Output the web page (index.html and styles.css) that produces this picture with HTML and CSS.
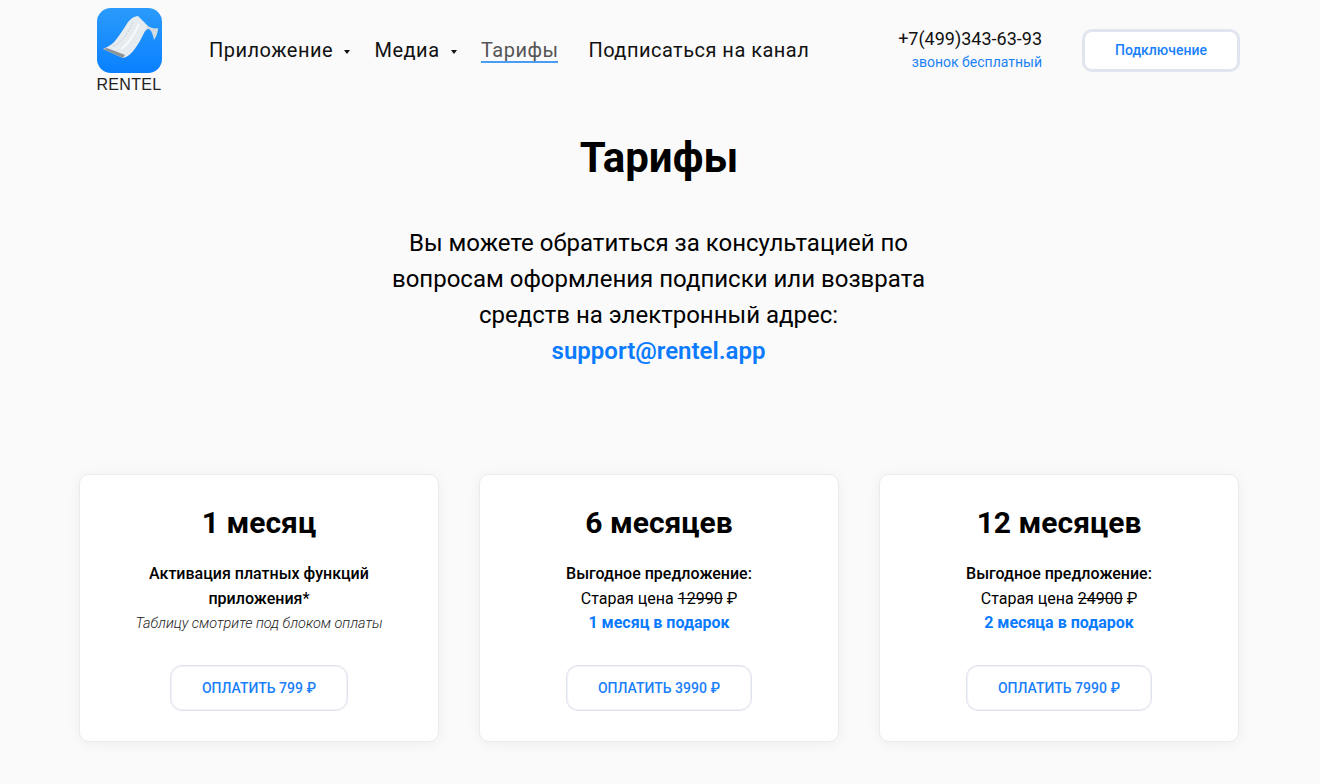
FILE: index.html
```html
<!DOCTYPE html>
<html lang="ru">
<head>
    <meta charset="UTF-8">
    <title>Тарифы</title>
    <link rel="stylesheet" href="styles.css">
</head>
<body>
    <header class="header">
        <a class="logo" href="#">
            <svg class="logo-icon" width="65" height="65" viewBox="0 0 65 65">
                <defs>
                    <linearGradient id="logoBg" x1="0" y1="0" x2="0" y2="1">
                        <stop offset="0" stop-color="#2a9bfb"/>
                        <stop offset="1" stop-color="#0a80ff"/>
                    </linearGradient>
                </defs>
                <rect width="65" height="65" rx="14" fill="url(#logoBg)"/>
                <!-- paper strip -->
                <path d="M6 41 C12 38 16 36 18 33 C23 27 27 20 31 14 C34 10 38 8 41 8 L51 18 C50 20 48 23 47 25 C44 31 41 37 37 42 C34 46 30 49 26 50 Z" fill="#e6ebef"/>
                <path d="M47 25 C48 22 50 19 51 18 C54 20 58 21 61 20 C61 25 59 29 57 32 C56 27 55 23 52 21 C50 21 48 23 47 25 Z" fill="#d4dce1"/>
                <path d="M6 41 L10 40 L28 47 L26 50 Z" fill="#8b9398"/>
                <path d="M16 38 C24 36 31 25 36 15" fill="none" stroke="#bfc9d0" stroke-width="1" stroke-dasharray="1.5 1.5"/>
                <path d="M24 41 C31 37 37 27 42 16" fill="none" stroke="#f6f8f9" stroke-width="2"/>
            </svg>
            <span class="logo-text">RENTEL</span>
        </a>
        <nav class="nav">
            <a class="nav-link has-caret" href="#">Приложение</a>
            <a class="nav-link has-caret" href="#">Медиа</a>
            <a class="nav-link active" href="#">Тарифы</a>
            <a class="nav-link" href="#">Подписаться на канал</a>
        </nav>
        <div class="phone">
            <a class="phone-number" href="#">+7(499)343-63-93</a>
            <span class="phone-note">звонок бесплатный</span>
        </div>
        <a class="connect-btn" href="#">Подключение</a>
    </header>

    <main>
        <section class="intro">
            <h1>Тарифы</h1>
            <p>Вы можете обратиться за консультацией по вопросам оформления подписки или возврата средств на электронный адрес:<br><a class="mail" href="#">support@rentel.app</a></p>
        </section>

        <section class="plans">
            <div class="plan">
                <h2>1 месяц</h2>
                <div class="plan-text">
                    <b>Активация платных функций приложения*</b><br>
                    <i class="plan-note">Таблицу смотрите под блоком оплаты</i>
                </div>
                <a class="pay-btn" href="#">Оплатить 799 ₽</a>
            </div>
            <div class="plan">
                <h2>6 месяцев</h2>
                <div class="plan-text">
                    <b>Выгодное предложение:</b><br>
                    Старая цена <s>12990</s> ₽<br>
                    <b class="gift">1 месяц в подарок</b>
                </div>
                <a class="pay-btn" href="#">Оплатить 3990 ₽</a>
            </div>
            <div class="plan">
                <h2>12 месяцев</h2>
                <div class="plan-text">
                    <b>Выгодное предложение:</b><br>
                    Старая цена <s>24900</s> ₽<br>
                    <b class="gift">2 месяца в подарок</b>
                </div>
                <a class="pay-btn" href="#">Оплатить 7990 ₽</a>
            </div>
        </section>
    </main>
</body>
</html>
```

FILE: styles.css
```css
* {
    box-sizing: border-box;
}

html, body {
    height: 100%;
    overflow: hidden;
}

body {
    margin: 0;
    background-color: #fafafa;
    color: #000;
    font-family: Roboto, "Liberation Sans", sans-serif;
}

a {
    text-decoration: none;
}

.header {
    display: flex;
    align-items: flex-start;
    width: 1144px;
    height: 100px;
    margin-left: 96px;
    padding-top: 8px;
}

.logo {
    display: flex;
    flex-direction: column;
    align-items: center;
    width: 66px;
}

.logo-icon {
    display: block;
}

.logo-text {
    margin-top: 3px;
    font-family: "Liberation Sans", Arial, sans-serif;
    font-size: 16px;
    line-height: 18px;
    letter-spacing: 0.35px;
    color: #222;
}

.nav {
    display: flex;
    gap: 30px;
    margin-left: 47px;
    padding-top: 29px;
}

.nav-link {
    height: 26px;
    font-size: 20px;
    line-height: 26px;
    letter-spacing: 0.48px;
    color: #111;
}

.nav-link.has-caret {
    display: flex;
    align-items: center;
    margin-right: -5.5px;
}

.nav-link.has-caret::after {
    content: "";
    margin-top: 4px;
    margin-left: 11px;
    border-top: 4px solid #111;
    border-left: 3px solid transparent;
    border-right: 3px solid transparent;
}

.nav-link.active {
    color: #555;
    border-bottom: 2px solid #4a9bf2;
}

.phone {
    display: flex;
    flex-direction: column;
    align-items: flex-end;
    margin-left: auto;
    padding-top: 19px;
}

.phone-number {
    font-size: 18px;
    line-height: 24px;
    color: #111;
}

.phone-note {
    font-size: 14px;
    line-height: 22px;
    color: #1a82f7;
}

.connect-btn {
    display: block;
    width: 158px;
    height: 43px;
    margin-top: 21px;
    margin-left: 40px;
    border: 3px solid #e0e5ee;
    border-radius: 10px;
    background-color: #fff;
    font-size: 14px;
    font-weight: 500;
    line-height: 37px;
    text-align: center;
    color: #1a7ffb;
}

.intro {
    width: 560px;
    margin: 0 auto;
    text-align: center;
}

.intro h1 {
    margin: 0;
    padding: 32px 2px 0 0;
    font-size: 42px;
    font-weight: 700;
    line-height: 52px;
}

.intro p {
    margin: 41px 0 0;
    padding: 0 13px 0 10px;
    font-size: 24px;
    line-height: 36px;
}

.mail {
    font-weight: 600;
    color: #0a7bff;
}

.plans {
    display: flex;
    gap: 40px;
    width: 1160px;
    margin: 105px 0 0 79px;
}

.plan {
    display: flex;
    flex-direction: column;
    align-items: center;
    width: 360px;
    height: 268px;
    padding: 28px 40px 0;
    border: 1px solid #e9ebee;
    border-radius: 10px;
    background-color: #fff;
    box-shadow: 0 2px 14px rgba(0, 0, 0, 0.05);
    text-align: center;
}

.plan h2 {
    margin: 0;
    font-size: 30px;
    font-weight: 700;
    line-height: 40px;
}

.plan-text {
    height: 74px;
    margin-top: 19px;
    font-size: 16px;
    line-height: 24.5px;
}

.plan-text b {
    font-weight: 500;
}

.plan-note {
    font-size: 14.4px;
    font-weight: 300;
    color: #222;
}

.plan-text .gift {
    font-weight: 700;
    color: #0a7bff;
}

.pay-btn {
    display: block;
    height: 46px;
    margin-top: 29px;
    padding: 0 30.5px;
    border: 1px solid #dfe3ee;
    border-radius: 12px;
    background-color: #fff;
    box-shadow: inset 0 0 0 1px rgba(228, 232, 241, 0.5);
    font-size: 14px;
    font-weight: 500;
    line-height: 44px;
    text-transform: uppercase;
    color: #1a7ffb;
}
```
